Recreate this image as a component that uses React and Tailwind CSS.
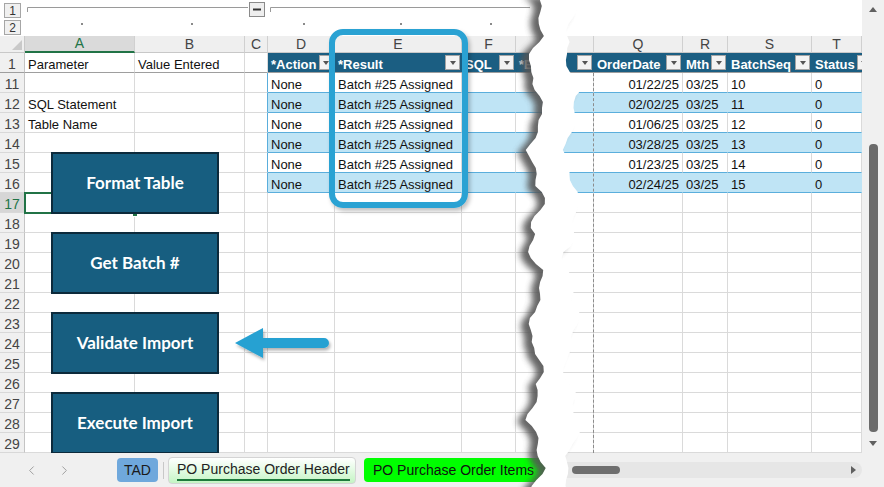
import React from "react";
import { ChevronLeft, ChevronRight } from "lucide-react";

const COLS = [
  { k: "A", w: "w-[110px]" },
  { k: "B", w: "w-[110px]" },
  { k: "C", w: "w-[23px]" },
  { k: "D", w: "w-[67px]" },
  { k: "E", w: "w-[127px]" },
  { k: "F", w: "w-[54px]" },
  { k: "G", w: "w-[29px]" },
  { k: "P", w: "w-[49px]" },
  { k: "Q", w: "w-[89px]" },
  { k: "R", w: "w-[45px]" },
  { k: "S", w: "w-[84px]" },
  { k: "T", w: "w-[50px]" },
];

const TABLE = new Set(["D", "E", "F", "G", "P", "Q", "R", "S", "T"]);

const HEADERS = {
  D: "*Action",
  E: "*Result",
  F: "SQL",
  G: "*E",
  P: "",
  Q: "OrderDate",
  R: "Mth",
  S: "BatchSeq",
  T: "Status",
};

const RIGHT = {
  11: ["01/22/25", "03/25", "10", "0"],
  12: ["02/02/25", "03/25", "11", "0"],
  13: ["01/06/25", "03/25", "12", "0"],
  14: ["03/28/25", "03/25", "13", "0"],
  15: ["01/23/25", "03/25", "14", "0"],
  16: ["02/24/25", "03/25", "15", "0"],
};

function content(n, k) {
  if (n === 1) {
    if (k === "A") return "Parameter";
    if (k === "B") return "Value Entered";
    return "";
  }
  if (n === 12 && k === "A") return "SQL Statement";
  if (n === 13 && k === "A") return "Table Name";
  if (n >= 11 && n <= 16) {
    if (k === "D") return "None";
    if (k === "E") return "Batch #25 Assigned";
    const d = RIGHT[n];
    if (k === "Q") return d[0];
    if (k === "R") return d[1];
    if (k === "S") return d[2];
    if (k === "T") return d[3];
  }
  return "";
}

function DropBtn() {
  return (
    <span className="shrink-0 w-[15px] h-[15px] box-border bg-[#f3f3f3] border border-[#a4a4a4] flex items-center justify-center">
      <span className="w-0 h-0 border-l-[3.5px] border-r-[3.5px] border-t-[4px] border-l-transparent border-r-transparent border-t-[#555555]" />
    </span>
  );
}

function HeaderCell({ c }) {
  const hideBtn = c.k === "G";
  return (
    <div
      className={`${c.w} shrink-0 h-full box-border border-b border-b-[#9e9e9e] bg-[#1b5e82] flex items-center gap-[2px] pl-[3px] pr-[2px] overflow-hidden`}
    >
      <span className="self-end shrink-0 whitespace-nowrap text-white font-bold text-[13px] leading-[14px]">
        {HEADERS[c.k]}
      </span>
      {!hideBtn && (
        <span className="ml-auto shrink-0">
          <DropBtn />
        </span>
      )}
    </div>
  );
}

function Cell({ n, c }) {
  const t = TABLE.has(c.k);
  if (n === 1 && t) return <HeaderCell c={c} />;
  const inTable = t && n >= 11 && n <= 16;
  const band = inTable && n % 2 === 0;
  let bg = "bg-white";
  let br = "border-r-[#dadada]";
  let bb = "border-b-[#dadada]";
  if (n === 1) bb = "border-b-[#9e9e9e]";
  if (inTable) {
    bb = "border-b-[#5aaedc]";
    if (band) {
      bg = "bg-[#bfe4f5]";
      br = "border-r-[#bfe4f5]";
    }
  }
  if (c.k === "C" && n >= 11 && n <= 16) br = "border-r-[#5aaedc]";
  const align = c.k === "Q" ? "justify-end pr-[3px]" : "pl-[3px]";
  return (
    <div
      className={`${c.w} shrink-0 h-full box-border border-r border-b ${br} ${bb} ${bg} flex items-end ${align} text-[13px] leading-[14px] whitespace-nowrap overflow-hidden text-[#111]`}
    >
      {content(n, c.k)}
    </div>
  );
}

function Row({ n }) {
  const isHdr = n === 1;
  const sel = n === 17;
  return (
    <div className="flex h-[20px]">
      <div
        className={`w-[25px] shrink-0 h-full box-border border-r border-r-[#c4c4c4] border-b flex items-end justify-center text-[14px] leading-[15px] ${
          isHdr ? "border-b-[#9e9e9e]" : "border-b-[#d8d8d8]"
        } ${sel ? "bg-[#d6d6d6] text-[#217346]" : "bg-[#f0f0f0] text-[#444]"}`}
      >
        {n}
      </div>
      {COLS.map((c) => (
        <Cell key={c.k} n={n} c={c} />
      ))}
    </div>
  );
}

function ColHeader() {
  return (
    <div className="flex h-[17px]">
      <div className="relative w-[25px] shrink-0 h-full box-border border-r border-b border-[#c8c8c8] bg-[#efefef]">
        <svg className="absolute right-[2px] bottom-[2px]" width="10" height="10">
          <polygon points="10,0 10,10 0,10" fill="#c9c9c9" />
        </svg>
      </div>
      {COLS.map((c) => {
        const isA = c.k === "A";
        const label = c.k === "G" || c.k === "P" ? "" : c.k;
        return (
          <div
            key={c.k}
            className={`${c.w} shrink-0 h-full box-border border-r border-r-[#d0d0d0] flex items-end justify-center text-[14px] leading-[16px] ${
              isA
                ? "bg-[#dadada] text-[#217346] border-b-2 border-b-[#217346]"
                : "bg-[#efefef] text-[#444] border-b border-b-[#c8c8c8]"
            }`}
          >
            {label}
          </div>
        );
      })}
    </div>
  );
}

function OutlineBar() {
  return (
    <div className="flex h-[36px] bg-white">
      <div className="w-[25px] shrink-0 flex flex-col gap-[2px] pt-[3px] pl-[4px]">
        <div className="w-[17px] h-[15px] box-border border border-[#a6a6a6] bg-[#f0f0f0] flex items-center justify-center text-[12px] leading-[12px] text-[#333]">
          1
        </div>
        <div className="w-[17px] h-[15px] box-border border border-[#a6a6a6] bg-[#f0f0f0] flex items-center justify-center text-[12px] leading-[12px] text-[#333]">
          2
        </div>
      </div>
      <svg width="837" height="36" className="shrink-0">
        <path d="M2.5 12 V7.5 H223" stroke="#9a9a9a" strokeWidth="1" fill="none" />
        <rect x="224.5" y="2.5" width="15" height="14" fill="#eeeeee" stroke="#8a8a8a" />
        <line x1="228" y1="9.5" x2="236" y2="9.5" stroke="#333" strokeWidth="2" />
        <path d="M245.5 12 V7.5 H505" stroke="#9a9a9a" strokeWidth="1" fill="none" />
        {[56, 166, 278, 375, 465].map((x) => (
          <rect key={x} x={x} y="23" width="2" height="2" fill="#8a8a8a" />
        ))}
      </svg>
    </div>
  );
}

function Btn({ top, label }) {
  return (
    <div
      className={`absolute left-[51px] ${top} w-[168px] h-[62px] box-border border-2 border-[#0c2a3b] bg-[#175e80] flex items-center justify-center text-white font-bold text-[17px] font-['Lato',sans-serif]`}
    >
      {label}
    </div>
  );
}

function VScroll() {
  return (
    <div className="w-[22px] h-[453px] bg-[#f0f0f0] flex flex-col items-center">
      <div className="h-[18px] flex items-center justify-center">
        <span className="w-0 h-0 border-l-[4px] border-r-[4px] border-b-[5px] border-l-transparent border-r-transparent border-b-[#606060]" />
      </div>
      <div className="h-[126px]" />
      <div className="w-[9px] h-[288px] rounded-[4px] bg-[#6b6b6b]" />
      <div className="flex-1" />
      <div className="h-[14px] mb-[3px] flex items-center justify-center">
        <span className="w-0 h-0 border-l-[4px] border-r-[4px] border-t-[5px] border-l-transparent border-r-transparent border-t-[#606060]" />
      </div>
    </div>
  );
}

function TabBar() {
  return (
    <div className="flex h-[34px] bg-[#f0f0f0] items-center">
      <div className="w-[117px] shrink-0 h-full flex items-center pl-[24px] gap-[18px] text-[#9a9a9a]">
        <ChevronLeft size={15} strokeWidth={1.5} />
        <ChevronRight size={15} strokeWidth={1.5} />
      </div>
      <div className="w-[41px] shrink-0 h-[24px] rounded-[4px] bg-[#6fa8dc] flex items-center justify-center text-[14px] text-[#1a1a1a]">
        TAD
      </div>
      <div className="ml-[5px] shrink-0 w-px h-[17px] bg-[#c8c8c8]" />
      <div className="ml-[4px] shrink-0 w-[188px] h-[27px] box-border rounded-[4px] border border-[#d4d4d4] bg-gradient-to-b from-white to-[#c4f5c4] flex items-center pl-[8px]">
        <span className="text-[14px] leading-[16px] text-[#222] border-b-2 border-b-[#1e7a3c] pb-[2px] mt-[2px] whitespace-nowrap">
          PO Purchase Order Header
        </span>
      </div>
      <div className="ml-[8px] shrink-0 w-[185px] h-[24px] rounded-[4px] bg-[#00ff00] flex items-center pl-[9px] text-[14px] text-[#111] whitespace-nowrap overflow-hidden">
        PO Purchase Order Items
      </div>
      <div className="ml-[7px] flex-1 h-[16px] rounded-r-[8px] bg-[#e6e6e6] flex items-center">
        <div className="ml-[16px] w-[48px] h-[8px] rounded-full bg-[#6f6f6f]" />
        <div className="flex-1" />
        <span className="mr-[6px] w-0 h-0 border-t-[4px] border-b-[4px] border-l-[5px] border-t-transparent border-b-transparent border-l-[#606060]" />
      </div>
      <div className="w-[22px] shrink-0" />
    </div>
  );
}

function Tear() {
  const H = 487;
  const L = [];
  const R = [];
  let i = 0;
  for (let y = -6; y <= H + 8; y += 6) {
    const j = ((i * 37) % 13) / 13 - 0.5;
    const j2 = ((i * 53) % 17) / 17 - 0.5;
    L.push([
      (41 + 6 * Math.sin(y / 14) + 3 * Math.sin(y / 5.3 + 1) + 4 * j).toFixed(1),
      y,
    ]);
    R.push([
      (77 + 6 * Math.sin(y / 17 + 2) + 3 * Math.sin(y / 6.1) + 4 * j2).toFixed(1),
      y,
    ]);
    i++;
  }
  const d =
    "M" +
    L.map((p) => p.join(" ")).join(" L") +
    " L" +
    R.slice()
      .reverse()
      .map((p) => p.join(" "))
      .join(" L") +
    " Z";
  return (
    <svg
      className="absolute left-[495px] top-0 z-30 pointer-events-none"
      width="100"
      height="487"
    >
      <defs>
        <filter id="tearblur" x="-50%" y="-10%" width="200%" height="120%">
          <feGaussianBlur stdDeviation="3" />
        </filter>
      </defs>
      <path d={d} fill="#555555" opacity="0.9" transform="translate(-8 3)" filter="url(#tearblur)" />
      <path d={d} fill="#ffffff" />
    </svg>
  );
}

function Arrow() {
  return (
    <svg className="absolute left-[230px] top-[322px]" width="106" height="44">
      <defs>
        <filter id="arsh" x="-20%" y="-30%" width="140%" height="160%">
          <feDropShadow dx="1.5" dy="2.5" stdDeviation="1.5" floodColor="#000" floodOpacity="0.3" />
        </filter>
      </defs>
      <path
        d="M5 21 L33 6 L33 16 L94 16 A5 5 0 0 1 94 26 L33 26 L33 36 Z"
        fill="#27a1d2"
        filter="url(#arsh)"
      />
    </svg>
  );
}

export default function App() {
  const rows = [1];
  for (let n = 11; n <= 29; n++) rows.push(n);
  return (
    <div className="relative w-[884px] h-[487px] overflow-hidden bg-white font-['Liberation_Sans',Arial,sans-serif] text-[#111]">
      <div className="flex h-[453px]">
        <div className="relative w-[862px] h-[453px] overflow-hidden">
          <OutlineBar />
          <ColHeader />
          {rows.map((n) => (
            <Row key={n} n={n} />
          ))}
          <div className="absolute left-[593px] top-[73px] h-[380px] w-0 border-l border-dashed border-[#8c8c8c]" />
          <div className="absolute left-[24px] top-[192px] w-[112px] h-[22px] border-2 border-[#217346]" />
          <div className="absolute left-[132px] top-[211px] w-[6px] h-[6px] bg-[#217346] border border-white" />
          <Btn top="top-[152px]" label="Format Table" />
          <Btn top="top-[232px]" label="Get Batch #" />
          <Btn top="top-[312px]" label="Validate Import" />
          <Btn top="top-[392px]" label="Execute Import" />
          <div className="absolute left-[329px] top-[29px] w-[139px] h-[179px] box-border border-[6px] border-[#2aa2d3] rounded-[14px] shadow-[2px_3px_4px_rgba(0,0,0,0.25)]" />
          <Arrow />
        </div>
        <VScroll />
      </div>
      <TabBar />
      <Tear />
    </div>
  );
}
